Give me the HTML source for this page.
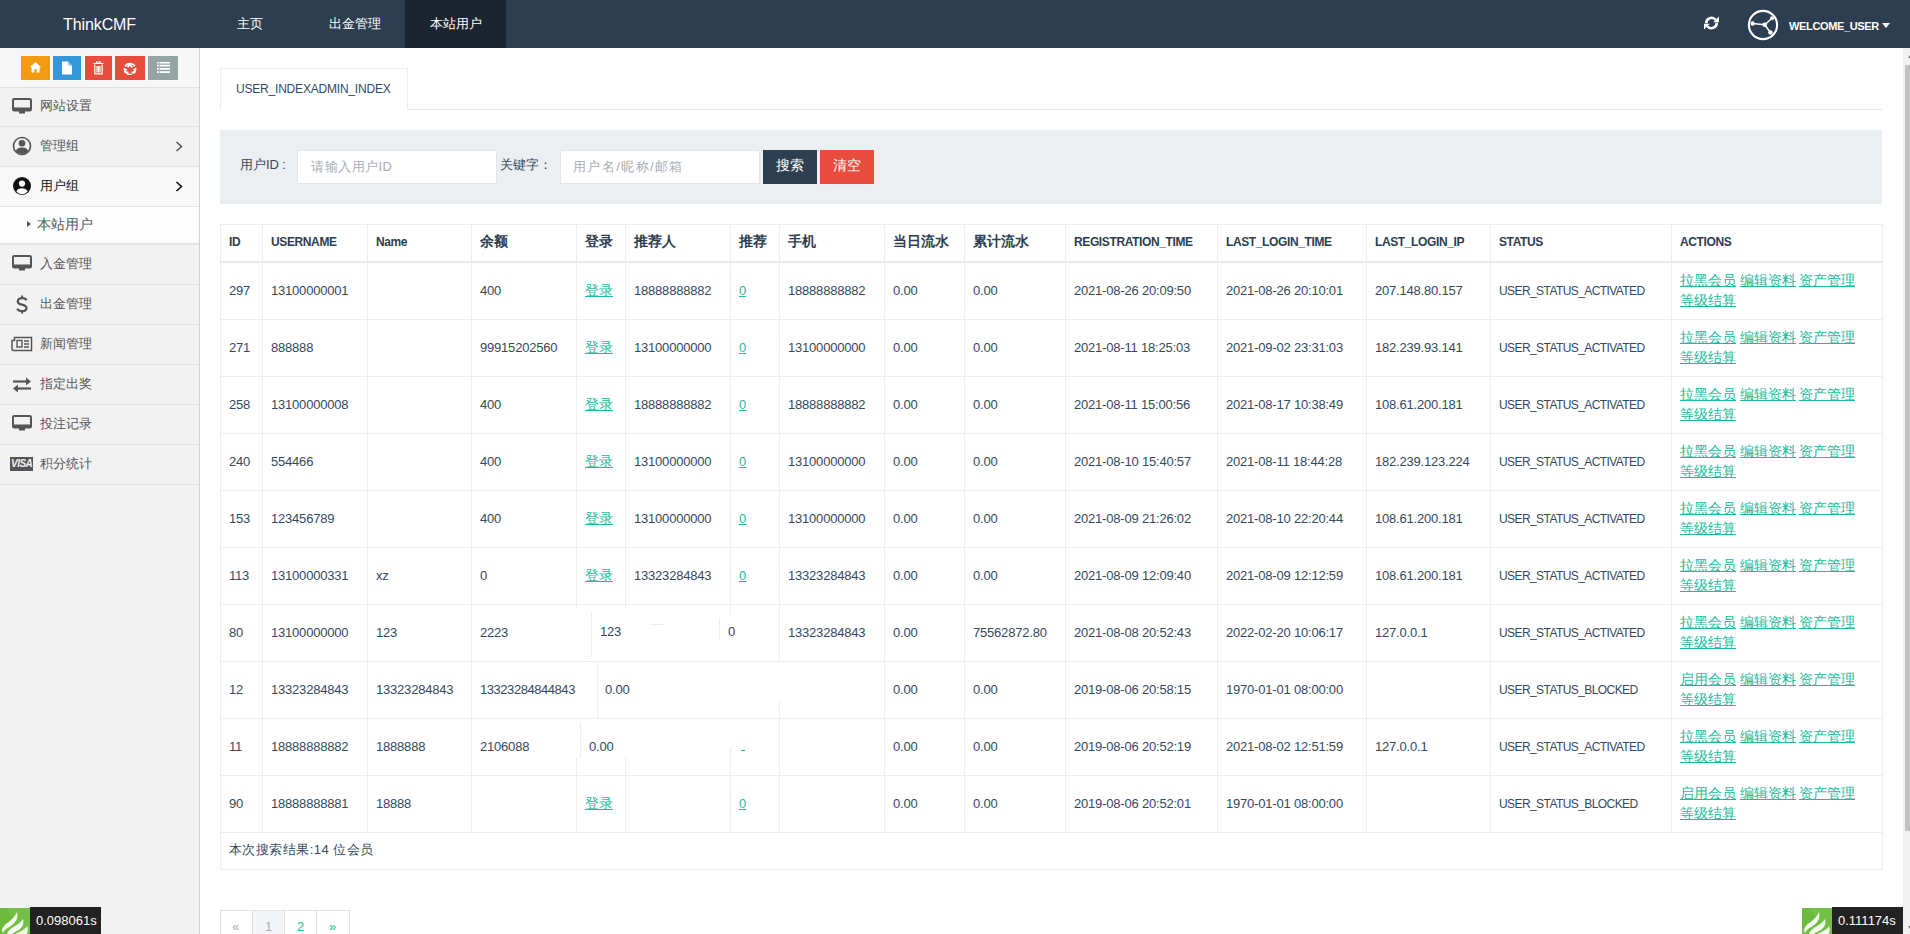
<!DOCTYPE html>
<html><head><meta charset="utf-8"><title>ThinkCMF</title>
<style>
*{box-sizing:border-box;margin:0;padding:0}
html,body{width:1910px;height:934px;overflow:hidden;background:#fff;font-family:"Liberation Sans",sans-serif;color:#34495e;font-size:13px}
.a{position:absolute}
.t{position:absolute;white-space:nowrap;line-height:16px}
.nav{left:0;top:0;width:1910px;height:48px;background:#2c3e50}
.side{left:0;top:48px;width:200px;height:886px;background:#f3f2f3;border-right:1px solid #d2d2d4}
.tb{top:56px;height:24px}
.mi{left:0;width:199px;height:40px;border-top:1px solid #e3e3e3;background:#f3f2f3}
.mt{font-size:13px;color:#555;line-height:16px}
.vl{position:absolute;width:1px;background:#eceef1}
.hl{position:absolute;height:1px;background:#eceef1}
.cell{position:absolute;white-space:nowrap;font-size:13px;color:#34495e;line-height:16px}
.hd{font-weight:bold;color:#2c3e50}
.lnk{color:#1abc9c;text-decoration:underline;font-size:14px}
</style></head><body>

<div class="a nav"></div>
<div class="t" style="left:63px;top:16px;font-size:16px;line-height:18px;color:#fff;letter-spacing:-0.1px">ThinkCMF</div>
<div class="a" style="left:405px;top:0;width:101px;height:48px;background:#1a252f"></div>
<div class="t" style="left:237px;top:16px;font-size:13px;color:#fff">主页</div>
<div class="t" style="left:329px;top:16px;font-size:13px;color:#fff">出金管理</div>
<div class="t" style="left:430px;top:16px;font-size:13px;color:#fff">本站用户</div>
<svg class="a" style="left:1703px;top:15px" width="17" height="16" viewBox="0 0 17 16">
<path d="M3.2 8.2A5.3 5.3 0 0 1 12.6 4.8" fill="none" stroke="#fff" stroke-width="2.6"/>
<path d="M10.2 7.2H16V1.4Z" fill="#fff"/>
<path d="M13.8 7.8A5.3 5.3 0 0 1 4.4 11.2" fill="none" stroke="#fff" stroke-width="2.6"/>
<path d="M6.8 8.8H1V14.6Z" fill="#fff"/>
</svg>
<svg class="a" style="left:1747px;top:9px" width="32" height="32" viewBox="0 0 32 32">
<circle cx="16" cy="16" r="14.1" fill="none" stroke="#fff" stroke-width="2.1"/>
<path d="M5.6 14.5L17.7 15.7L25 9.2M17.7 15.7L23.4 23.5" stroke="#fff" stroke-width="1.5" fill="none"/>
<circle cx="5.6" cy="14.5" r="2.2" fill="#fff"/><circle cx="17.7" cy="15.7" r="2.3" fill="#fff"/><circle cx="25" cy="9.2" r="2" fill="#fff"/><circle cx="23.4" cy="23.5" r="2.2" fill="#fff"/>
</svg>
<div class="t" style="left:1789px;top:18px;font-size:11px;font-weight:bold;color:#fff;letter-spacing:-0.35px">WELCOME_USER</div>
<div class="a" style="left:1882px;top:23px;width:0;height:0;border-left:4px solid transparent;border-right:4px solid transparent;border-top:5px solid #fff"></div>
<div class="a side"></div>
<div class="a" style="left:0;top:48px;width:199px;height:39px;background:#f7f7f8"></div>
<div class="a tb" style="left:21px;width:29px;background:#f39c12"></div>
<div class="a tb" style="left:53px;width:28px;background:#3498db"></div>
<div class="a tb" style="left:85px;width:27px;background:#e74c3c"></div>
<div class="a tb" style="left:115px;width:30px;background:#e74c3c"></div>
<div class="a tb" style="left:148px;width:30px;background:#95a5a6"></div>
<svg class="a" style="left:29px;top:61px" width="13" height="12" viewBox="0 0 13 12"><path d="M6.5 1L0.8 6.3H2.5V11.5H5.3V8H7.7V11.5H10.5V6.3H12.2Z" fill="#fff"/></svg>
<svg class="a" style="left:61px;top:61px" width="12" height="14" viewBox="0 0 12 14"><path d="M1 0.5H7L11 4.5V13.5H1Z" fill="#fff"/><path d="M7 0.5V4.5H11" fill="#3498db" opacity=".5"/></svg>
<svg class="a" style="left:92px;top:61px" width="13" height="14" viewBox="0 0 13 14"><path d="M1.5 2.5H11.5M4.5 2.5V1H8.5V2.5M2.8 3.5V12.8H10.2V3.5M5 5V11.5M6.5 5V11.5M8 5V11.5" stroke="#fff" stroke-width="1.2" fill="none"/></svg>
<svg class="a" style="left:123px;top:61px" width="14" height="14" viewBox="0 0 14 14"><path d="M7 1.2L10.2 6.4L8.2 6.4L7 4.4L5.6 6.8L3.6 5.6Z M11.6 7.6L13 10.2C12.6 11.6 11.6 12.4 10.2 12.4H8.6V10.4H10.2L11 9.2L9.8 8.6Z M2.4 7.6L4.2 8.6L3 10.6H5.4V12.6H3C1.6 12.4 0.8 11 1.2 9.8Z" fill="#fff"/><circle cx="7" cy="8" r="5.6" fill="none" stroke="#fff" stroke-width="1.6" stroke-dasharray="5 1.6"/></svg>
<svg class="a" style="left:157px;top:62px" width="13" height="11" viewBox="0 0 13 11"><path d="M0 0.5H13M0 3.7H13M0 6.9H13M0 10.1H13" stroke="#fff" stroke-width="1.8"/><path d="M2.2 0V11" stroke="#95a5a6" stroke-width="0.8"/></svg>
<div class="hl" style="left:0;top:87px;width:199px;background:#e1e1e3"></div>
<div class="a mi" style="top:87px;background:#f3f2f3"></div>
<div class="a mi" style="top:126px;background:#f3f2f3"></div>
<div class="a mi" style="top:166px;background:#f8f8f9"></div>
<div class="a mi" style="top:206px;height:38px;background:#fdfdfd"></div>
<div class="hl" style="left:0;top:243px;width:199px;background:#e3e3e3"></div>
<div class="a mi" style="top:244px"></div>
<div class="a mi" style="top:284px"></div>
<div class="a mi" style="top:324px"></div>
<div class="a mi" style="top:364px"></div>
<div class="a mi" style="top:404px"></div>
<div class="a mi" style="top:444px"></div>
<div class="hl" style="left:0;top:484px;width:199px;background:#e3e3e3"></div>
<svg class="a" style="left:12px;top:98px" width="20" height="17" viewBox="0 0 20 17"><rect x="1" y="1" width="18" height="11.5" rx="1.3" fill="none" stroke="#555" stroke-width="2"/><rect x="1" y="9.5" width="18" height="3" fill="#555"/><rect x="7" y="13" width="6" height="2.5" fill="#555"/></svg>
<div class="t mt" style="left:40px;top:98px;color:#555">网站设置</div>
<svg class="a" style="left:12px;top:136px" width="20" height="20" viewBox="0 0 20 20"><circle cx="10" cy="10" r="8.5" fill="none" stroke="#555" stroke-width="1.6"/><circle cx="10" cy="7.3" r="3.3" fill="#555"/><path d="M3.8 15.2C5 12 7.5 11.5 10 11.5S15 12 16.2 15.2L16 15.6A8.5 8.5 0 0 1 4 15.6Z" fill="#555"/></svg>
<div class="t mt" style="left:40px;top:138px;color:#555">管理组</div>
<svg class="a" style="left:175px;top:141px" width="8" height="11" viewBox="0 0 8 11"><path d="M1.5 1L6.5 5.5L1.5 10" fill="none" stroke="#555" stroke-width="1.6"/></svg>
<svg class="a" style="left:12px;top:176px" width="20" height="20" viewBox="0 0 20 20"><circle cx="10" cy="10" r="9" fill="#111"/><circle cx="10" cy="7.6" r="3.1" fill="#fff"/><path d="M4.3 15.6C5.3 13.2 7.3 12.3 10 12.3S14.7 13.2 15.7 15.6A7.6 7.6 0 0 1 4.3 15.6Z" fill="#fff"/></svg>
<div class="t mt" style="left:40px;top:178px;color:#111">用户组</div>
<svg class="a" style="left:175px;top:181px" width="8" height="11" viewBox="0 0 8 11"><path d="M1.5 1L6.5 5.5L1.5 10" fill="none" stroke="#111" stroke-width="1.6"/></svg>
<div class="a" style="left:27px;top:221px;width:0;height:0;border-top:3.5px solid transparent;border-bottom:3.5px solid transparent;border-left:4px solid #555"></div>
<div class="t mt" style="left:37px;top:216px;font-size:14px;">本站用户</div>
<svg class="a" style="left:12px;top:255px" width="20" height="17" viewBox="0 0 20 17"><rect x="1" y="1" width="18" height="11.5" rx="1.3" fill="none" stroke="#555" stroke-width="2"/><rect x="1" y="9.5" width="18" height="3" fill="#555"/><rect x="7" y="13" width="6" height="2.5" fill="#555"/></svg>
<div class="t mt" style="left:40px;top:256px">入金管理</div>
<svg class="a" style="left:16px;top:295px" width="12" height="19" viewBox="0 0 12 19"><path d="M10.5 5.2C9.8 3.8 8.2 3.2 6.2 3.2C3.6 3.2 1.8 4.4 1.8 6.4C1.8 8.6 4 9.2 6 9.7C8.2 10.2 10.4 10.8 10.4 13C10.4 15 8.4 16.2 6 16.2C3.6 16.2 2 15.2 1.3 13.6" fill="none" stroke="#555" stroke-width="2.3"/><path d="M6.1 0.5V3.4M6.1 16V18.6" stroke="#555" stroke-width="2"/></svg>
<div class="t mt" style="left:40px;top:296px">出金管理</div>
<svg class="a" style="left:11px;top:336px" width="22" height="16" viewBox="0 0 22 16"><path d="M3.5 1.5H20.5V14.5H2.5A1.5 1.5 0 0 1 1 13V4.5H3.5Z" fill="none" stroke="#555" stroke-width="1.5"/><rect x="6" y="4.5" width="5" height="6.5" fill="none" stroke="#555" stroke-width="1.4"/><path d="M13 5H18M13 8H18M13 11H18" stroke="#555" stroke-width="1.4"/></svg>
<div class="t mt" style="left:40px;top:336px">新闻管理</div>
<svg class="a" style="left:12px;top:377px" width="20" height="16" viewBox="0 0 20 16"><path d="M1 4.5H16" stroke="#555" stroke-width="2.2"/><path d="M14 0.5L19 4.5L14 8.5Z" fill="#555"/><path d="M4 11.5H19" stroke="#555" stroke-width="2.2"/><path d="M6 7.5L1 11.5L6 15.5Z" fill="#555"/></svg>
<div class="t mt" style="left:40px;top:376px">指定出奖</div>
<svg class="a" style="left:12px;top:415px" width="20" height="17" viewBox="0 0 20 17"><rect x="1" y="1" width="18" height="11.5" rx="1.3" fill="none" stroke="#555" stroke-width="2"/><rect x="1" y="9.5" width="18" height="3" fill="#555"/><rect x="7" y="13" width="6" height="2.5" fill="#555"/></svg>
<div class="t mt" style="left:40px;top:416px">投注记录</div>
<div class="a" style="left:10px;top:457px;width:23px;height:14px;background:#555"></div><div class="t" style="left:11px;top:456px;font-size:10px;font-weight:bold;font-style:italic;color:#f3f3f4;line-height:16px;letter-spacing:-0.5px">VISA</div>
<div class="t mt" style="left:40px;top:456px">积分统计</div>
<div class="hl" style="left:220px;top:109px;width:1662px;background:#e5e8ea"></div>
<div class="a" style="left:220px;top:68px;width:188px;height:42px;background:#fff;border:1px solid #eceff1;border-bottom:none"></div>
<div class="t" style="left:236px;top:81px;font-size:12px;color:#34495e;letter-spacing:-0.2px">USER_INDEXADMIN_INDEX</div>
<div class="a" style="left:220px;top:130px;width:1662px;height:74px;background:#eceff1"></div>
<div class="t" style="left:240px;top:157px;font-size:13px;color:#34495e">用户ID<span style="margin-left:3px">:</span></div>
<div class="a" style="left:297px;top:150px;width:200px;height:34px;background:#fff;border:1px solid #e3e6e8"></div>
<div class="t" style="left:311px;top:159px;font-size:13px;color:#a7aeb5;letter-spacing:0.5px">请输入用户ID</div>
<div class="t" style="left:500px;top:157px;font-size:13px;color:#34495e">关键字：</div>
<div class="a" style="left:560px;top:150px;width:200px;height:34px;background:#fff;border:1px solid #e3e6e8"></div>
<div class="t" style="left:573px;top:159px;font-size:13px;color:#a7aeb5;letter-spacing:1.4px">用户名/昵称/邮箱</div>
<div class="a" style="left:763px;top:150px;width:54px;height:34px;background:#2c3e50"></div>
<div class="t" style="left:776px;top:157px;font-size:14px;color:#fff">搜索</div>
<div class="a" style="left:820px;top:150px;width:54px;height:34px;background:#e74c3c"></div>
<div class="t" style="left:833px;top:157px;font-size:14px;color:#fff">清空</div>
<div class="a" style="left:220px;top:224px;width:1663px;height:646px;border:1px solid #eceef1"></div>
<div class="hl" style="left:220px;top:261px;width:1662px;height:2px;background:#e8eaed"></div>
<div class="hl" style="left:220px;top:319px;width:1662px"></div>
<div class="hl" style="left:220px;top:376px;width:1662px"></div>
<div class="hl" style="left:220px;top:433px;width:1662px"></div>
<div class="hl" style="left:220px;top:490px;width:1662px"></div>
<div class="hl" style="left:220px;top:547px;width:1662px"></div>
<div class="hl" style="left:220px;top:604px;width:1662px"></div>
<div class="hl" style="left:220px;top:661px;width:1662px"></div>
<div class="hl" style="left:220px;top:718px;width:1662px"></div>
<div class="hl" style="left:220px;top:775px;width:1662px"></div>
<div class="hl" style="left:220px;top:832px;width:1662px"></div>
<div class="vl" style="left:262px;top:224px;height:608px"></div>
<div class="vl" style="left:367px;top:224px;height:608px"></div>
<div class="vl" style="left:471px;top:224px;height:608px"></div>
<div class="vl" style="left:576px;top:224px;height:384px"></div>
<div class="vl" style="left:576px;top:758px;height:74px"></div>
<div class="vl" style="left:625px;top:224px;height:384px"></div>
<div class="vl" style="left:625px;top:758px;height:74px"></div>
<div class="vl" style="left:730px;top:224px;height:391px"></div>
<div class="vl" style="left:730px;top:747px;height:85px"></div>
<div class="vl" style="left:779px;top:224px;height:437px"></div>
<div class="vl" style="left:779px;top:700px;height:132px"></div>
<div class="vl" style="left:884px;top:224px;height:608px"></div>
<div class="vl" style="left:964px;top:224px;height:608px"></div>
<div class="vl" style="left:1065px;top:224px;height:608px"></div>
<div class="vl" style="left:1217px;top:224px;height:608px"></div>
<div class="vl" style="left:1366px;top:224px;height:608px"></div>
<div class="vl" style="left:1490px;top:224px;height:608px"></div>
<div class="vl" style="left:1671px;top:224px;height:608px"></div>
<div class="vl" style="left:591px;top:612px;height:45px"></div>
<div class="vl" style="left:719px;top:618px;height:22px"></div>
<div class="vl" style="left:597px;top:661px;height:57px"></div>
<div class="vl" style="left:580px;top:722px;height:36px"></div>
<div class="hl" style="left:650px;top:624px;width:14px"></div>
<div class="cell hd" style="left:229px;top:234px;font-size:12px;letter-spacing:-0.38px">ID</div>
<div class="cell hd" style="left:271px;top:234px;font-size:12px;letter-spacing:-0.38px">USERNAME</div>
<div class="cell hd" style="left:376px;top:234px;font-size:12px;letter-spacing:-0.38px">Name</div>
<div class="cell hd" style="left:480px;top:234px;font-size:14px;top:233px">余额</div>
<div class="cell hd" style="left:585px;top:234px;font-size:14px;top:233px">登录</div>
<div class="cell hd" style="left:634px;top:234px;font-size:14px;top:233px">推荐人</div>
<div class="cell hd" style="left:739px;top:234px;font-size:14px;top:233px">推荐</div>
<div class="cell hd" style="left:788px;top:234px;font-size:14px;top:233px">手机</div>
<div class="cell hd" style="left:893px;top:234px;font-size:14px;top:233px">当日流水</div>
<div class="cell hd" style="left:973px;top:234px;font-size:14px;top:233px">累计流水</div>
<div class="cell hd" style="left:1074px;top:234px;font-size:12px;letter-spacing:-0.38px">REGISTRATION_TIME</div>
<div class="cell hd" style="left:1226px;top:234px;font-size:12px;letter-spacing:-0.38px">LAST_LOGIN_TIME</div>
<div class="cell hd" style="left:1375px;top:234px;font-size:12px;letter-spacing:-0.38px">LAST_LOGIN_IP</div>
<div class="cell hd" style="left:1499px;top:234px;font-size:12px;letter-spacing:-0.38px">STATUS</div>
<div class="cell hd" style="left:1680px;top:234px;font-size:12px;letter-spacing:-0.38px">ACTIONS</div>
<div class="cell" style="left:229px;letter-spacing:-0.2px;top:283px">297</div>
<div class="cell" style="left:271px;letter-spacing:-0.2px;top:283px">13100000001</div>
<div class="cell" style="left:480px;letter-spacing:-0.2px;top:283px">400</div>
<div class="cell lnk" style="left:585px;top:282px">登录</div>
<div class="cell" style="left:634px;letter-spacing:-0.2px;top:283px">18888888882</div>
<div class="cell lnk" style="left:739px;top:283px;font-size:13px">0</div>
<div class="cell" style="left:788px;letter-spacing:-0.2px;top:283px">18888888882</div>
<div class="cell" style="left:893px;letter-spacing:-0.2px;top:283px">0.00</div>
<div class="cell" style="left:973px;letter-spacing:-0.2px;top:283px">0.00</div>
<div class="cell" style="left:1074px;letter-spacing:-0.2px;top:283px">2021-08-26 20:09:50</div>
<div class="cell" style="left:1226px;letter-spacing:-0.2px;top:283px">2021-08-26 20:10:01</div>
<div class="cell" style="left:1375px;letter-spacing:-0.2px;top:283px">207.148.80.157</div>
<div class="cell" style="left:1499px;font-size:12px;letter-spacing:-0.58px;top:283px">USER_STATUS_ACTIVATED</div>
<div class="cell lnk" style="left:1680px;top:270px;line-height:20px">拉黑会员</div>
<div class="cell lnk" style="left:1740px;top:270px;line-height:20px">编辑资料</div>
<div class="cell lnk" style="left:1799px;top:270px;line-height:20px">资产管理</div>
<div class="cell lnk" style="left:1680px;top:290px;line-height:20px">等级结算</div>
<div class="cell" style="left:229px;letter-spacing:-0.2px;top:340px">271</div>
<div class="cell" style="left:271px;letter-spacing:-0.2px;top:340px">888888</div>
<div class="cell" style="left:480px;letter-spacing:-0.2px;top:340px">99915202560</div>
<div class="cell lnk" style="left:585px;top:339px">登录</div>
<div class="cell" style="left:634px;letter-spacing:-0.2px;top:340px">13100000000</div>
<div class="cell lnk" style="left:739px;top:340px;font-size:13px">0</div>
<div class="cell" style="left:788px;letter-spacing:-0.2px;top:340px">13100000000</div>
<div class="cell" style="left:893px;letter-spacing:-0.2px;top:340px">0.00</div>
<div class="cell" style="left:973px;letter-spacing:-0.2px;top:340px">0.00</div>
<div class="cell" style="left:1074px;letter-spacing:-0.2px;top:340px">2021-08-11 18:25:03</div>
<div class="cell" style="left:1226px;letter-spacing:-0.2px;top:340px">2021-09-02 23:31:03</div>
<div class="cell" style="left:1375px;letter-spacing:-0.2px;top:340px">182.239.93.141</div>
<div class="cell" style="left:1499px;font-size:12px;letter-spacing:-0.58px;top:340px">USER_STATUS_ACTIVATED</div>
<div class="cell lnk" style="left:1680px;top:327px;line-height:20px">拉黑会员</div>
<div class="cell lnk" style="left:1740px;top:327px;line-height:20px">编辑资料</div>
<div class="cell lnk" style="left:1799px;top:327px;line-height:20px">资产管理</div>
<div class="cell lnk" style="left:1680px;top:347px;line-height:20px">等级结算</div>
<div class="cell" style="left:229px;letter-spacing:-0.2px;top:397px">258</div>
<div class="cell" style="left:271px;letter-spacing:-0.2px;top:397px">13100000008</div>
<div class="cell" style="left:480px;letter-spacing:-0.2px;top:397px">400</div>
<div class="cell lnk" style="left:585px;top:396px">登录</div>
<div class="cell" style="left:634px;letter-spacing:-0.2px;top:397px">18888888882</div>
<div class="cell lnk" style="left:739px;top:397px;font-size:13px">0</div>
<div class="cell" style="left:788px;letter-spacing:-0.2px;top:397px">18888888882</div>
<div class="cell" style="left:893px;letter-spacing:-0.2px;top:397px">0.00</div>
<div class="cell" style="left:973px;letter-spacing:-0.2px;top:397px">0.00</div>
<div class="cell" style="left:1074px;letter-spacing:-0.2px;top:397px">2021-08-11 15:00:56</div>
<div class="cell" style="left:1226px;letter-spacing:-0.2px;top:397px">2021-08-17 10:38:49</div>
<div class="cell" style="left:1375px;letter-spacing:-0.2px;top:397px">108.61.200.181</div>
<div class="cell" style="left:1499px;font-size:12px;letter-spacing:-0.58px;top:397px">USER_STATUS_ACTIVATED</div>
<div class="cell lnk" style="left:1680px;top:384px;line-height:20px">拉黑会员</div>
<div class="cell lnk" style="left:1740px;top:384px;line-height:20px">编辑资料</div>
<div class="cell lnk" style="left:1799px;top:384px;line-height:20px">资产管理</div>
<div class="cell lnk" style="left:1680px;top:404px;line-height:20px">等级结算</div>
<div class="cell" style="left:229px;letter-spacing:-0.2px;top:454px">240</div>
<div class="cell" style="left:271px;letter-spacing:-0.2px;top:454px">554466</div>
<div class="cell" style="left:480px;letter-spacing:-0.2px;top:454px">400</div>
<div class="cell lnk" style="left:585px;top:453px">登录</div>
<div class="cell" style="left:634px;letter-spacing:-0.2px;top:454px">13100000000</div>
<div class="cell lnk" style="left:739px;top:454px;font-size:13px">0</div>
<div class="cell" style="left:788px;letter-spacing:-0.2px;top:454px">13100000000</div>
<div class="cell" style="left:893px;letter-spacing:-0.2px;top:454px">0.00</div>
<div class="cell" style="left:973px;letter-spacing:-0.2px;top:454px">0.00</div>
<div class="cell" style="left:1074px;letter-spacing:-0.2px;top:454px">2021-08-10 15:40:57</div>
<div class="cell" style="left:1226px;letter-spacing:-0.2px;top:454px">2021-08-11 18:44:28</div>
<div class="cell" style="left:1375px;letter-spacing:-0.2px;top:454px">182.239.123.224</div>
<div class="cell" style="left:1499px;font-size:12px;letter-spacing:-0.58px;top:454px">USER_STATUS_ACTIVATED</div>
<div class="cell lnk" style="left:1680px;top:441px;line-height:20px">拉黑会员</div>
<div class="cell lnk" style="left:1740px;top:441px;line-height:20px">编辑资料</div>
<div class="cell lnk" style="left:1799px;top:441px;line-height:20px">资产管理</div>
<div class="cell lnk" style="left:1680px;top:461px;line-height:20px">等级结算</div>
<div class="cell" style="left:229px;letter-spacing:-0.2px;top:511px">153</div>
<div class="cell" style="left:271px;letter-spacing:-0.2px;top:511px">123456789</div>
<div class="cell" style="left:480px;letter-spacing:-0.2px;top:511px">400</div>
<div class="cell lnk" style="left:585px;top:510px">登录</div>
<div class="cell" style="left:634px;letter-spacing:-0.2px;top:511px">13100000000</div>
<div class="cell lnk" style="left:739px;top:511px;font-size:13px">0</div>
<div class="cell" style="left:788px;letter-spacing:-0.2px;top:511px">13100000000</div>
<div class="cell" style="left:893px;letter-spacing:-0.2px;top:511px">0.00</div>
<div class="cell" style="left:973px;letter-spacing:-0.2px;top:511px">0.00</div>
<div class="cell" style="left:1074px;letter-spacing:-0.2px;top:511px">2021-08-09 21:26:02</div>
<div class="cell" style="left:1226px;letter-spacing:-0.2px;top:511px">2021-08-10 22:20:44</div>
<div class="cell" style="left:1375px;letter-spacing:-0.2px;top:511px">108.61.200.181</div>
<div class="cell" style="left:1499px;font-size:12px;letter-spacing:-0.58px;top:511px">USER_STATUS_ACTIVATED</div>
<div class="cell lnk" style="left:1680px;top:498px;line-height:20px">拉黑会员</div>
<div class="cell lnk" style="left:1740px;top:498px;line-height:20px">编辑资料</div>
<div class="cell lnk" style="left:1799px;top:498px;line-height:20px">资产管理</div>
<div class="cell lnk" style="left:1680px;top:518px;line-height:20px">等级结算</div>
<div class="cell" style="left:229px;letter-spacing:-0.2px;top:568px">113</div>
<div class="cell" style="left:271px;letter-spacing:-0.2px;top:568px">13100000331</div>
<div class="cell" style="left:376px;letter-spacing:-0.2px;top:568px">xz</div>
<div class="cell" style="left:480px;letter-spacing:-0.2px;top:568px">0</div>
<div class="cell lnk" style="left:585px;top:567px">登录</div>
<div class="cell" style="left:634px;letter-spacing:-0.2px;top:568px">13323284843</div>
<div class="cell lnk" style="left:739px;top:568px;font-size:13px">0</div>
<div class="cell" style="left:788px;letter-spacing:-0.2px;top:568px">13323284843</div>
<div class="cell" style="left:893px;letter-spacing:-0.2px;top:568px">0.00</div>
<div class="cell" style="left:973px;letter-spacing:-0.2px;top:568px">0.00</div>
<div class="cell" style="left:1074px;letter-spacing:-0.2px;top:568px">2021-08-09 12:09:40</div>
<div class="cell" style="left:1226px;letter-spacing:-0.2px;top:568px">2021-08-09 12:12:59</div>
<div class="cell" style="left:1375px;letter-spacing:-0.2px;top:568px">108.61.200.181</div>
<div class="cell" style="left:1499px;font-size:12px;letter-spacing:-0.58px;top:568px">USER_STATUS_ACTIVATED</div>
<div class="cell lnk" style="left:1680px;top:555px;line-height:20px">拉黑会员</div>
<div class="cell lnk" style="left:1740px;top:555px;line-height:20px">编辑资料</div>
<div class="cell lnk" style="left:1799px;top:555px;line-height:20px">资产管理</div>
<div class="cell lnk" style="left:1680px;top:575px;line-height:20px">等级结算</div>
<div class="cell" style="left:229px;letter-spacing:-0.2px;top:625px">80</div>
<div class="cell" style="left:271px;letter-spacing:-0.2px;top:625px">13100000000</div>
<div class="cell" style="left:376px;letter-spacing:-0.2px;top:625px">123</div>
<div class="cell" style="left:480px;letter-spacing:-0.2px;top:625px">2223</div>
<div class="cell" style="left:788px;letter-spacing:-0.2px;top:625px">13323284843</div>
<div class="cell" style="left:893px;letter-spacing:-0.2px;top:625px">0.00</div>
<div class="cell" style="left:973px;letter-spacing:-0.2px;top:625px">75562872.80</div>
<div class="cell" style="left:1074px;letter-spacing:-0.2px;top:625px">2021-08-08 20:52:43</div>
<div class="cell" style="left:1226px;letter-spacing:-0.2px;top:625px">2022-02-20 10:06:17</div>
<div class="cell" style="left:1375px;letter-spacing:-0.2px;top:625px">127.0.0.1</div>
<div class="cell" style="left:1499px;font-size:12px;letter-spacing:-0.58px;top:625px">USER_STATUS_ACTIVATED</div>
<div class="cell lnk" style="left:1680px;top:612px;line-height:20px">拉黑会员</div>
<div class="cell lnk" style="left:1740px;top:612px;line-height:20px">编辑资料</div>
<div class="cell lnk" style="left:1799px;top:612px;line-height:20px">资产管理</div>
<div class="cell lnk" style="left:1680px;top:632px;line-height:20px">等级结算</div>
<div class="cell" style="left:229px;letter-spacing:-0.2px;top:682px">12</div>
<div class="cell" style="left:271px;letter-spacing:-0.2px;top:682px">13323284843</div>
<div class="cell" style="left:376px;letter-spacing:-0.2px;top:682px">13323284843</div>
<div class="cell" style="left:893px;letter-spacing:-0.2px;top:682px">0.00</div>
<div class="cell" style="left:973px;letter-spacing:-0.2px;top:682px">0.00</div>
<div class="cell" style="left:1074px;letter-spacing:-0.2px;top:682px">2019-08-06 20:58:15</div>
<div class="cell" style="left:1226px;letter-spacing:-0.2px;top:682px">1970-01-01 08:00:00</div>
<div class="cell" style="left:1499px;font-size:12px;letter-spacing:-0.58px;top:682px">USER_STATUS_BLOCKED</div>
<div class="cell lnk" style="left:1680px;top:669px;line-height:20px">启用会员</div>
<div class="cell lnk" style="left:1740px;top:669px;line-height:20px">编辑资料</div>
<div class="cell lnk" style="left:1799px;top:669px;line-height:20px">资产管理</div>
<div class="cell lnk" style="left:1680px;top:689px;line-height:20px">等级结算</div>
<div class="cell" style="left:229px;letter-spacing:-0.2px;top:739px">11</div>
<div class="cell" style="left:271px;letter-spacing:-0.2px;top:739px">18888888882</div>
<div class="cell" style="left:376px;letter-spacing:-0.2px;top:739px">1888888</div>
<div class="cell" style="left:480px;letter-spacing:-0.2px;top:739px">2106088</div>
<div class="cell" style="left:893px;letter-spacing:-0.2px;top:739px">0.00</div>
<div class="cell" style="left:973px;letter-spacing:-0.2px;top:739px">0.00</div>
<div class="cell" style="left:1074px;letter-spacing:-0.2px;top:739px">2019-08-06 20:52:19</div>
<div class="cell" style="left:1226px;letter-spacing:-0.2px;top:739px">2021-08-02 12:51:59</div>
<div class="cell" style="left:1375px;letter-spacing:-0.2px;top:739px">127.0.0.1</div>
<div class="cell" style="left:1499px;font-size:12px;letter-spacing:-0.58px;top:739px">USER_STATUS_ACTIVATED</div>
<div class="cell lnk" style="left:1680px;top:726px;line-height:20px">拉黑会员</div>
<div class="cell lnk" style="left:1740px;top:726px;line-height:20px">编辑资料</div>
<div class="cell lnk" style="left:1799px;top:726px;line-height:20px">资产管理</div>
<div class="cell lnk" style="left:1680px;top:746px;line-height:20px">等级结算</div>
<div class="cell" style="left:229px;letter-spacing:-0.2px;top:796px">90</div>
<div class="cell" style="left:271px;letter-spacing:-0.2px;top:796px">18888888881</div>
<div class="cell" style="left:376px;letter-spacing:-0.2px;top:796px">18888</div>
<div class="cell lnk" style="left:585px;top:795px">登录</div>
<div class="cell lnk" style="left:739px;top:796px;font-size:13px">0</div>
<div class="cell" style="left:893px;letter-spacing:-0.2px;top:796px">0.00</div>
<div class="cell" style="left:973px;letter-spacing:-0.2px;top:796px">0.00</div>
<div class="cell" style="left:1074px;letter-spacing:-0.2px;top:796px">2019-08-06 20:52:01</div>
<div class="cell" style="left:1226px;letter-spacing:-0.2px;top:796px">1970-01-01 08:00:00</div>
<div class="cell" style="left:1499px;font-size:12px;letter-spacing:-0.58px;top:796px">USER_STATUS_BLOCKED</div>
<div class="cell lnk" style="left:1680px;top:783px;line-height:20px">启用会员</div>
<div class="cell lnk" style="left:1740px;top:783px;line-height:20px">编辑资料</div>
<div class="cell lnk" style="left:1799px;top:783px;line-height:20px">资产管理</div>
<div class="cell lnk" style="left:1680px;top:803px;line-height:20px">等级结算</div>
<div class="cell" style="left:600px;top:624px;letter-spacing:-0.2px">123</div>
<div class="cell" style="left:728px;top:624px;letter-spacing:-0.2px">0</div>
<div class="cell" style="left:605px;top:682px;letter-spacing:-0.2px">0.00</div>
<div class="cell" style="left:589px;top:739px;letter-spacing:-0.2px">0.00</div>
<div class="cell" style="left:480px;top:682px;letter-spacing:-0.45px">13323284844843</div>
<div class="a" style="left:741px;top:750px;width:4px;height:1px;background:#1abc9c"></div>
<div class="t" style="left:229px;top:842px;font-size:13px;color:#34495e;letter-spacing:0.45px">本次搜索结果:14 位会员</div>
<div class="a" style="left:220px;top:910px;width:130px;height:30px;border:1px solid #dfe3e6;background:#fff"></div>
<div class="a" style="left:252px;top:911px;width:32px;height:29px;background:#f2f4f5"></div>
<div class="vl" style="left:252px;top:910px;height:30px;background:#dfe3e6"></div>
<div class="vl" style="left:284px;top:910px;height:30px;background:#dfe3e6"></div>
<div class="vl" style="left:316px;top:910px;height:30px;background:#dfe3e6"></div>
<div class="t" style="left:232px;top:919px;font-size:13px;color:#aab">&laquo;</div>
<div class="t" style="left:265px;top:919px;font-size:13px;color:#aab">1</div>
<div class="t" style="left:297px;top:919px;font-size:13px;color:#1abc9c">2</div>
<div class="t" style="left:329px;top:919px;font-size:13px;color:#1abc9c">&raquo;</div>
<svg class="a" style="left:0px;top:908px" width="30" height="26" viewBox="0 0 30 26"><rect width="30" height="26" fill="#74bf45"/><path d="M0 0H6L18 14L0 22Z" fill="#6ab83c" opacity=".6"/><path d="M2 22C3 15 13 14 17 4C18.5 10 16 15 10 18.5C6 20.5 4 22.5 3 25Z" fill="#f4fbef"/><path d="M7 26C9 19 19 18 23 11C24.5 17 21.5 21 16 23.5C13 24.8 11.5 26 10.5 26Z" fill="#f4fbef"/><path d="M15 26C19 24 25 22 27 18C28.5 22 27.5 25 26.5 26Z" fill="#f4fbef"/></svg>
<div class="a" style="left:30px;top:907px;width:71px;height:27px;background:#222"></div>
<div class="t" style="left:36px;top:913px;font-size:13px;color:#fff">0.098061s</div>
<svg class="a" style="left:1802px;top:908px" width="30" height="26" viewBox="0 0 30 26"><rect width="30" height="26" fill="#74bf45"/><path d="M0 0H6L18 14L0 22Z" fill="#6ab83c" opacity=".6"/><path d="M2 22C3 15 13 14 17 4C18.5 10 16 15 10 18.5C6 20.5 4 22.5 3 25Z" fill="#f4fbef"/><path d="M7 26C9 19 19 18 23 11C24.5 17 21.5 21 16 23.5C13 24.8 11.5 26 10.5 26Z" fill="#f4fbef"/><path d="M15 26C19 24 25 22 27 18C28.5 22 27.5 25 26.5 26Z" fill="#f4fbef"/></svg>
<div class="a" style="left:1832px;top:907px;width:71px;height:27px;background:#222"></div>
<div class="t" style="left:1838px;top:913px;font-size:13px;color:#fff">0.111174s</div>
<div class="a" style="left:1903px;top:48px;width:7px;height:886px;background:#f1f1f1"></div>
<div class="a" style="left:1905px;top:65px;width:5px;height:766px;background:#c1c1c1"></div>
<div class="a" style="left:1908px;top:55px;width:0;height:0;border-left:2px solid transparent;border-bottom:3px solid #777"></div>
<div class="a" style="left:1908px;top:926px;width:0;height:0;border-left:2px solid transparent;border-top:3px solid #777"></div>
</body></html>
